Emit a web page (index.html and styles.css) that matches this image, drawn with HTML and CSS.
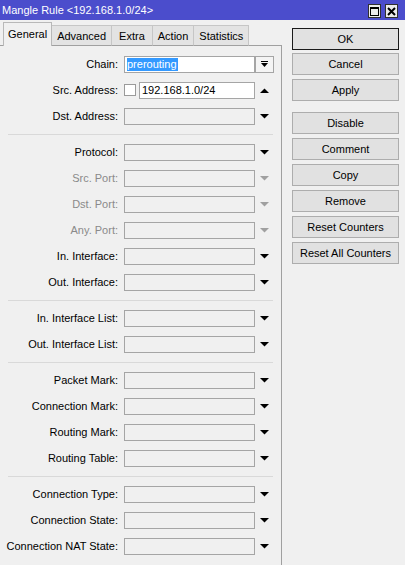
FILE: index.html
```html
<!DOCTYPE html>
<html>
<head>
<meta charset="utf-8">
<link rel="stylesheet" href="styles.css">
</head>
<body>
<div class="window">
  <div class="titlebar">
    <span class="title">Mangle Rule &lt;192.168.1.0/24&gt;</span>
    <div class="tb-btns">
      <span class="tb-btn"><svg width="9" height="9" viewBox="0 0 9 9"><rect x="0.5" y="0.5" width="8" height="8" fill="none" stroke="#000" stroke-width="1"/><rect x="0" y="0" width="9" height="2" fill="#000"/></svg></span>
      <span class="tb-btn"><svg width="9" height="9" viewBox="0 0 9 9"><path d="M1 1 L8 8 M8 1 L1 8" stroke="#000" stroke-width="2" fill="none"/></svg></span>
    </div>
  </div>
  <div class="main">
    <div class="left">
      <div class="tabs">
        <div class="tab-lead"></div>
        <div class="tab active">General</div>
        <div class="tab">Advanced</div>
        <div class="tab wide">Extra</div>
        <div class="tab">Action</div>
        <div class="tab">Statistics</div>
        <div class="tab-fill"></div>
      </div>
      <div class="panel">
        <div class="row">
          <span class="label">Chain:</span>
          <span class="input white"><span class="sel">prerouting</span></span>
          <span class="dd-btn"><svg width="7" height="7" viewBox="0 0 7 7"><rect x="0" y="0" width="7" height="1" fill="#000"/><polygon points="0,2 7,2 3.5,6" fill="#000"/></svg></span>
        </div>
        <div class="row">
          <span class="label">Src. Address:</span>
          <span class="check"></span>
          <span class="input white short">192.168.1.0/24</span>
          <span class="arrow"><svg width="9" height="5" viewBox="0 0 9 5"><polygon points="0,5 9,5 4.5,0.5" fill="#000"/></svg></span>
        </div>
        <div class="row">
          <span class="label">Dst. Address:</span>
          <span class="input"></span>
          <span class="arrow"><svg width="9" height="5" viewBox="0 0 9 5"><polygon points="0,0 9,0 4.5,4.5" fill="#000"/></svg></span>
        </div>
        <div class="sep"></div>
        <div class="row">
          <span class="label">Protocol:</span>
          <span class="input"></span>
          <span class="arrow"><svg width="9" height="5" viewBox="0 0 9 5"><polygon points="0,0 9,0 4.5,4.5" fill="#000"/></svg></span>
        </div>
        <div class="row dis">
          <span class="label">Src. Port:</span>
          <span class="input"></span>
          <span class="arrow"><svg width="9" height="5" viewBox="0 0 9 5"><polygon points="0,0 9,0 4.5,4.5" fill="#a0a0a0"/></svg></span>
        </div>
        <div class="row dis">
          <span class="label">Dst. Port:</span>
          <span class="input"></span>
          <span class="arrow"><svg width="9" height="5" viewBox="0 0 9 5"><polygon points="0,0 9,0 4.5,4.5" fill="#a0a0a0"/></svg></span>
        </div>
        <div class="row dis">
          <span class="label">Any. Port:</span>
          <span class="input"></span>
          <span class="arrow"><svg width="9" height="5" viewBox="0 0 9 5"><polygon points="0,0 9,0 4.5,4.5" fill="#a0a0a0"/></svg></span>
        </div>
        <div class="row">
          <span class="label">In. Interface:</span>
          <span class="input"></span>
          <span class="arrow"><svg width="9" height="5" viewBox="0 0 9 5"><polygon points="0,0 9,0 4.5,4.5" fill="#000"/></svg></span>
        </div>
        <div class="row">
          <span class="label">Out. Interface:</span>
          <span class="input"></span>
          <span class="arrow"><svg width="9" height="5" viewBox="0 0 9 5"><polygon points="0,0 9,0 4.5,4.5" fill="#000"/></svg></span>
        </div>
        <div class="sep"></div>
        <div class="row">
          <span class="label">In. Interface List:</span>
          <span class="input"></span>
          <span class="arrow"><svg width="9" height="5" viewBox="0 0 9 5"><polygon points="0,0 9,0 4.5,4.5" fill="#000"/></svg></span>
        </div>
        <div class="row">
          <span class="label">Out. Interface List:</span>
          <span class="input"></span>
          <span class="arrow"><svg width="9" height="5" viewBox="0 0 9 5"><polygon points="0,0 9,0 4.5,4.5" fill="#000"/></svg></span>
        </div>
        <div class="sep"></div>
        <div class="row">
          <span class="label">Packet Mark:</span>
          <span class="input"></span>
          <span class="arrow"><svg width="9" height="5" viewBox="0 0 9 5"><polygon points="0,0 9,0 4.5,4.5" fill="#000"/></svg></span>
        </div>
        <div class="row">
          <span class="label">Connection Mark:</span>
          <span class="input"></span>
          <span class="arrow"><svg width="9" height="5" viewBox="0 0 9 5"><polygon points="0,0 9,0 4.5,4.5" fill="#000"/></svg></span>
        </div>
        <div class="row">
          <span class="label">Routing Mark:</span>
          <span class="input"></span>
          <span class="arrow"><svg width="9" height="5" viewBox="0 0 9 5"><polygon points="0,0 9,0 4.5,4.5" fill="#000"/></svg></span>
        </div>
        <div class="row">
          <span class="label">Routing Table:</span>
          <span class="input"></span>
          <span class="arrow"><svg width="9" height="5" viewBox="0 0 9 5"><polygon points="0,0 9,0 4.5,4.5" fill="#000"/></svg></span>
        </div>
        <div class="sep"></div>
        <div class="row">
          <span class="label">Connection Type:</span>
          <span class="input"></span>
          <span class="arrow"><svg width="9" height="5" viewBox="0 0 9 5"><polygon points="0,0 9,0 4.5,4.5" fill="#000"/></svg></span>
        </div>
        <div class="row">
          <span class="label">Connection State:</span>
          <span class="input"></span>
          <span class="arrow"><svg width="9" height="5" viewBox="0 0 9 5"><polygon points="0,0 9,0 4.5,4.5" fill="#000"/></svg></span>
        </div>
        <div class="row">
          <span class="label">Connection NAT State:</span>
          <span class="input"></span>
          <span class="arrow"><svg width="9" height="5" viewBox="0 0 9 5"><polygon points="0,0 9,0 4.5,4.5" fill="#000"/></svg></span>
        </div>
      </div>
    </div>
    <div class="buttons">
      <div class="btn default">OK</div>
      <div class="btn">Cancel</div>
      <div class="btn">Apply</div>
      <div class="btn gap">Disable</div>
      <div class="btn">Comment</div>
      <div class="btn">Copy</div>
      <div class="btn">Remove</div>
      <div class="btn">Reset Counters</div>
      <div class="btn">Reset All Counters</div>
    </div>
  </div>
</div>
</body>
</html>
```
FILE: styles.css
```css
html, body {
  margin: 0;
  padding: 0;
  background: #f0f0f0;
  overflow: hidden;
}
body {
  font-family: "Liberation Sans", Arial, sans-serif;
  font-size: 11px;
  color: #000;
}
.window {
  width: 405px;
  height: 565px;
  overflow: hidden;
}
.titlebar {
  height: 20px;
  background: #4b4dcc;
  color: #fff;
  display: flex;
  align-items: center;
  justify-content: space-between;
  padding-left: 2px;
}
.title {
  font-size: 11px;
  line-height: 20px;
}
.tb-btns {
  display: flex;
  gap: 4px;
  margin-right: 7px;
  margin-top: 2px;
}
.tb-btn {
  width: 11px;
  height: 12px;
  border: 1px solid #303030;
  background: #ececec;
  display: flex;
  align-items: center;
  justify-content: center;
}
.tb-btn svg { display: block; }
.main {
  display: flex;
  align-items: flex-start;
}
.left {
  width: 282px;
  flex: none;
}
.tabs {
  height: 26px;
  display: flex;
  align-items: flex-end;
}
.tab-lead {
  width: 3px;
  height: 0;
  border-bottom: 1px solid #a0a0a0;
}
.tab-fill {
  flex: 1;
  height: 0;
  border-bottom: 1px solid #a0a0a0;
}
.tab {
  height: 19px;
  line-height: 21px;
  padding: 0 5px;
  background: #e3e3e3;
  border-top: 1px solid #c6c6c6;
  border-right: 1px solid #c6c6c6;
  border-bottom: 1px solid #a0a0a0;
  box-sizing: content-box;
}
.tab.wide {
  padding: 0 7px;
}
.tab.active {
  height: 23px;
  line-height: 22px;
  background: #f0f0f0;
  border: 1px solid #b8b8b8;
  border-bottom: none;
  padding: 0 4px;
}
.panel {
  height: 540px;
  border-right: 1px solid #a0a0a0;
  padding-top: 5px;
  box-sizing: border-box;
}
.row {
  height: 26px;
  display: flex;
  align-items: center;
}
.label {
  width: 118px;
  text-align: right;
  margin-right: 6px;
  white-space: nowrap;
  flex: none;
}
.row.dis .label { color: #8a8a8a; }
.input {
  width: 131px;
  height: 17px;
  box-sizing: border-box;
  border: 1px solid #a5a5a5;
  background: #f0f0f0;
  flex: none;
  padding-left: 2px;
  line-height: 15px;
  white-space: nowrap;
  overflow: hidden;
}
.input.white { background: #fff; }
.input.short { width: 116px; }
.sel {
  background: #3399ff;
  color: #fff;
  display: inline-block;
  line-height: 13px;
  padding-right: 1px;
}
.check {
  width: 12px;
  height: 12px;
  box-sizing: border-box;
  border: 1px solid #9a9a9a;
  background: #fff;
  margin-right: 3px;
  flex: none;
}
.arrow {
  width: 19px;
  height: 17px;
  display: flex;
  align-items: center;
  justify-content: center;
  flex: none;
}
.arrow svg { display: block; }
.dd-btn {
  width: 19px;
  height: 17px;
  box-sizing: border-box;
  border: 1px solid #a5a5a5;
  background: #f4f4f4;
  display: flex;
  align-items: center;
  justify-content: center;
  flex: none;
}
.dd-btn svg { display: block; }
.sep {
  margin: 5px 0 4px 8px;
  width: 265px;
  height: 1px;
  background: #d9d9d9;
}
.buttons {
  margin-left: 10px;
  width: 107px;
  padding-top: 8px;
  display: flex;
  flex-direction: column;
  gap: 4px;
}
.btn {
  height: 22px;
  box-sizing: border-box;
  border: 1px solid #adadad;
  background: #e1e1e1;
  text-align: center;
  line-height: 20px;
  white-space: nowrap;
}
.btn.default {
  border: 1px solid #1a1a1a;
  margin-bottom: -1px;
}
.btn.gap {
  margin-top: 7px;
}
```
